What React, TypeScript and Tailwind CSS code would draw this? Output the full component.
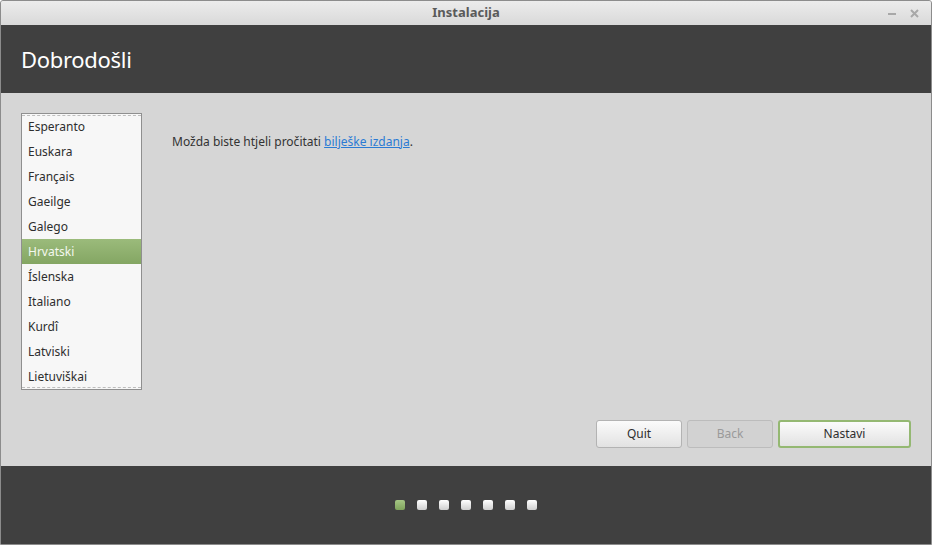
import React from "react";

const languages = [
  "Esperanto",
  "Euskara",
  "Français",
  "Gaeilge",
  "Galego",
  "Hrvatski",
  "Íslenska",
  "Italiano",
  "Kurdî",
  "Latviski",
  "Lietuviškai",
];

export default function App() {
  const selected = "Hrvatski";
  const step = 0;

  return (
    <div
      className="w-[932px] h-[545px] flex flex-col border border-[#8c8c8c] rounded-t-[3px] overflow-hidden bg-[#d6d6d6] text-[12px]"
      style={{ fontFamily: '"Noto Sans", "Open Sans", sans-serif' }}
    >
      {/* title bar */}
      <div className="h-[24px] shrink-0 relative flex items-center justify-center bg-gradient-to-b from-[#ececec] to-[#d9d9d9]">
        <span className="font-bold text-[13px] text-[#5a5a5a]">Instalacija</span>
        <div className="absolute right-[12px] top-0 h-full flex items-center gap-[14px] text-[#a8a8a8]">
          <div className="w-[8px] h-[2px] bg-[#a8a8a8] mt-[2px]" />
          <svg width="9" height="9" viewBox="0 0 9 9">
            <path d="M1 1L8 8M8 1L1 8" stroke="#a8a8a8" strokeWidth="2" />
          </svg>
        </div>
      </div>

      {/* header */}
      <div className="h-[68px] shrink-0 bg-[#404040] flex items-center px-[20px]">
        <h1 className="text-white text-[22px] font-normal tracking-[-0.3px]">Dobrodošli</h1>
      </div>

      {/* body */}
      <div className="flex-1 flex pl-[20px] pr-[20px] pt-[20px] pb-[18px]">
        <div className="w-[121px] h-[277px] border border-[#8f8f8f] bg-[#f7f7f7] relative">
          <div className="absolute left-0 right-0 top-[1px] border-t border-dashed border-[#bdbdbd]" />
          {languages.map((lang) =>
            lang === selected ? (
              <div
                key={lang}
                className="h-[25px] flex items-center px-[6px] bg-gradient-to-b from-[#9bbb7b] to-[#84a663] text-[#f4f8ef]"
              >
                {lang}
              </div>
            ) : (
              <div key={lang} className="h-[25px] flex items-center px-[6px] text-[#2e2e2e]">
                {lang}
              </div>
            )
          )}
          <div className="absolute left-0 right-0 bottom-[1px] border-t border-dashed border-[#bdbdbd]" />
        </div>

        <div className="flex-1 flex flex-col pl-[30px]">
          <p className="pt-[20px] text-[#333333]">
            Možda biste htjeli pročitati{" "}
            <span className="text-[#2b7bd4] underline">bilješke izdanja</span>.
          </p>

          <div className="mt-auto flex justify-end gap-[5px]">
            <button className="w-[86px] h-[28px] rounded-[3px] border border-[#b3b3b3] bg-gradient-to-b from-[#fbfbfb] to-[#e2e2e2] text-[#2e2e2e]">
              Quit
            </button>
            <button className="w-[86px] h-[28px] rounded-[3px] border border-[#bcbcbc] bg-[#d2d2d2] text-[#9a9a9a]">
              Back
            </button>
            <button className="w-[133px] h-[28px] rounded-[3px] border-2 border-[#94b872] bg-gradient-to-b from-[#fbfbfb] to-[#e2e2e2] text-[#2e2e2e]">
              Nastavi
            </button>
          </div>
        </div>
      </div>

      {/* footer */}
      <div className="h-[78px] shrink-0 bg-[#404040] flex items-center justify-center gap-[12px] pb-[1px]">
        {[0, 1, 2, 3, 4, 5, 6].map((i) =>
          i === step ? (
            <div
              key={i}
              className="w-[10px] h-[10px] rounded-[2px] bg-gradient-to-b from-[#a6c785] to-[#7fa35c]"
            />
          ) : (
            <div
              key={i}
              className="w-[10px] h-[10px] rounded-[2px] bg-gradient-to-b from-[#ffffff] to-[#cfcfcf]"
            />
          )
        )}
      </div>
    </div>
  );
}
